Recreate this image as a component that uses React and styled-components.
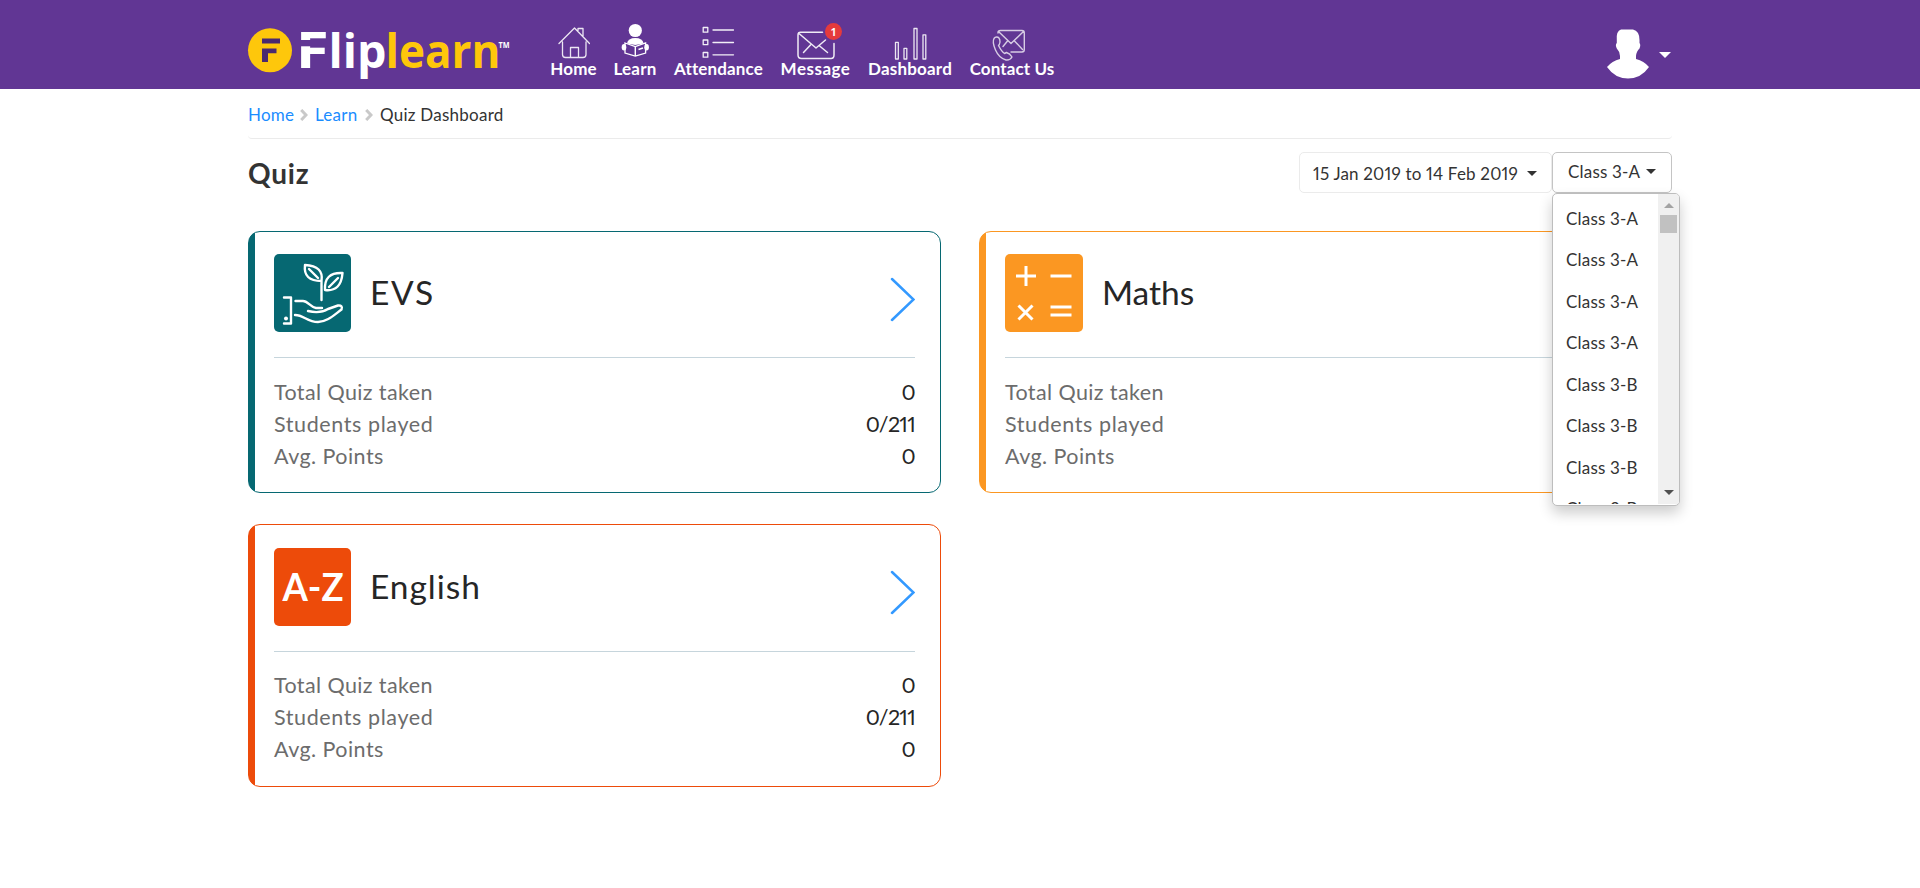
import React from "react";
import styled, { createGlobalStyle } from "styled-components";

const GlobalStyle = createGlobalStyle`
  * { box-sizing: border-box; }
  html, body { margin: 0; padding: 0; background: #fff; }
  body { font-family: Lato, "Open Sans", sans-serif; font-size: 17px; color: #333; overflow: hidden; font-variant-numeric: proportional-nums; }
`;

const Header = styled.header`
  height: 89px;
  background: #613694;
`;

const Container = styled.div`
  width: 1424px;
  margin: 0 auto;
`;

const HeaderInner = styled(Container)`
  display: flex;
  height: 89px;
`;

const Logo = styled.svg`
  display: block;
  flex: none;
  width: 264px;
  height: 60px;
  margin-top: 24px;
  overflow: visible;
`;

const Nav = styled.nav`
  display: flex;
  gap: 18px;
  margin-left: 39px;
  padding-top: 21px;
`;

const NavItem = styled.a`
  position: relative;
  display: flex;
  flex-direction: column;
  align-items: center;
  width: ${(p) => p.$width}px;
  color: #fff;
  font-size: 17px;
  font-weight: 700;
  line-height: 20px;
  white-space: nowrap;
  letter-spacing: ${(p) => p.$track || 0}px;
  svg { display: block; height: 39px; margin-bottom: -1px; }
`;

const Badge = styled.span`
  position: absolute;
  top: 2px;
  left: 44px;
  width: 17px;
  height: 17px;
  border-radius: 50%;
  background: #e53a3c;
  font-size: 12px;
  line-height: 17px;
  text-align: center;
  letter-spacing: 0;
`;

const Account = styled.div`
  display: flex;
  align-items: center;
  gap: 10px;
  margin-left: auto;
  padding: 20px 1px 0 0;
`;

const Caret = styled.i`
  flex: none;
  border: 5px solid transparent;
  border-width: 5px 5px 0;
  border-top-color: ${(p) => p.$color || "#333"};
`;

const BigCaret = styled(Caret)`
  border-width: 6px 6px 0;
`;

const Breadcrumb = styled.div`
  display: flex;
  align-items: center;
  height: 50px;
  padding-top: 2px;
  border-bottom: 1px solid #ebebeb;
  border-radius: 4px;
  font-size: 17px;
  svg { margin: 0 7px; }
`;

const Crumb = styled.span`
  width: ${(p) => p.$width}px;
  white-space: nowrap;
  letter-spacing: 0.25px;
  color: ${(p) => (p.$link ? "#1a8cff" : "#333")};
`;

const TitleRow = styled.div`
  display: flex;
  padding-top: 13px;
  height: 92px;
`;

const Title = styled.h1`
  margin: 0 auto 0 0;
  font-size: 28px;
  font-weight: 700;
  line-height: 42px;
  letter-spacing: 0.8px;
`;

const Select = styled.div`
  position: relative;
  display: flex;
  align-items: center;
  width: ${(p) => p.$width}px;
  height: 41px;
  padding: ${(p) => p.$pad};
  justify-content: space-between;
  border: 1px solid ${(p) => p.$border};
  border-radius: 5px;
  background: #fff;
  white-space: nowrap;
  letter-spacing: ${(p) => p.$track || 0}px;
`;

const Menu = styled.div`
  position: absolute;
  z-index: 2;
  top: 40px;
  left: -1px;
  display: flex;
  width: 128px;
  height: 313px;
  padding-bottom: 1px;
  overflow: hidden;
  border: 1px solid #bdbdbd;
  border-radius: 5px;
  background: #fff;
  box-shadow: 0 7px 14px rgba(0, 0, 0, 0.2);
`;

const Options = styled.div`
  flex: 1;
  padding: 4px 0 0 13px;
  overflow: hidden;
`;

const Option = styled.div`
  height: 41.45px;
  line-height: 41.45px;
  font-size: 17px;
`;

const Scrollbar = styled.div`
  display: flex;
  flex-direction: column;
  align-items: center;
  width: 21px;
  background: #f0f0f0;
`;

const ScrollArrow = styled.i`
  margin: ${(p) => (p.$up ? "9px 0 7px" : "auto 0 9px")};
  border: 5px solid transparent;
  ${(p) =>
    p.$up
      ? "border-top: 0; border-bottom-color: #a3a3a3;"
      : "border-bottom: 0; border-top-color: #505050;"}
`;

const Thumb = styled.i`
  width: 17px;
  height: 18px;
  background: #c1c1c1;
`;

const Cards = styled.div`
  display: grid;
  grid-template-columns: 693px 693px;
  gap: 31.05px 38px;
`;

const Card = styled.section`
  height: 262.4px;
  padding: 22.2px 25px 0 25px;
  border: 1px solid ${(p) => p.$color};
  border-radius: 12px;
  background: linear-gradient(${(p) => p.$color}, ${(p) => p.$color}) 0 0 / 6px 100% no-repeat;
`;

const CardHead = styled.div`
  display: flex;
  height: 104px;
  border-bottom: 1px solid #c6d5dc;
`;

const CardTitle = styled.h2`
  margin: 0 auto 0 19px;
  font-size: 33.5px;
  font-weight: 400;
  line-height: 76px;
  color: #262626;
  letter-spacing: ${(p) => p.$track || 0}px;
`;

const Tile = styled.svg`
  flex: none;
  width: ${(p) => p.$width}px;
  height: 78px;
  border-radius: 5px;
  background: ${(p) => p.$color};
`;

const Arrow = styled.svg`
  margin-top: 22.5px;
`;

const Stats = styled.dl`
  margin: 0;
  padding-top: 17.500px;
  font-size: 21.5px;
  line-height: 32px;
`;

const Stat = styled.div`
  display: flex;
  justify-content: space-between;
  dt { color: #6c6c6c; letter-spacing: ${(p) => p.$track}px; }
  dd { margin: 0; color: #262626; letter-spacing: -0.7px; }
`;

const line = { fill: "none", stroke: "#fff", strokeLinecap: "round", strokeLinejoin: "round" };

const FliplearnLogo = () => (
  <Logo viewBox="248 24 264 60" fontFamily="'Open Sans', sans-serif" fontWeight="700">
    <circle cx="270" cy="50.3" r="22" fill="#fec70b" />
    <path d="M262 38.5H280V43.5H262ZM262 48.5H276.5V53.3H268V62H262Z" fill="#4a2a70" />
    <g fill="#fff" fontSize="47">
      <text x="295.8" y="68.3" fontSize="50.5" textLength="33" lengthAdjust="spacingAndGlyphs">F</text>
      <text x="328.5" y="68.3" textLength="58" lengthAdjust="spacingAndGlyphs">lip</text>
    </g>
    <path d="M298 40H330V46.3H298Z" fill="#613694" />
    <text x="385.5" y="68.3" fontSize="47" fill="#fec70b" textLength="115" lengthAdjust="spacingAndGlyphs">learn</text>
    <text x="498.5" y="47.8" fontSize="8.5" fill="#fff" textLength="11" lengthAdjust="spacingAndGlyphs">TM</text>
  </Logo>
);

const HomeIcon = () => (
  <svg width="32" height="39" viewBox="558 21 32 39" {...line} strokeWidth="1.3" strokeOpacity=".88">
    <path d="M559 43.5L574.5 28L589.5 43.5M562.5 42V54.5Q562.5 57.5 565.5 57.5H583Q586 57.5 586 54.5V42M570.5 57V47.5H578.5V57M578 30.5V28.5H583V36" />
  </svg>
);

const LearnIcon = () => (
  <svg width="28" height="39" viewBox="621 21 28 39">
    <circle cx="635.3" cy="30.5" r="6.6" fill="#fff" />
    <path d="M627 43.5Q628 38 635.3 38T643.6 43.5L635.3 45Z" fill="#fff" />
    <path d="M625 43L635.3 46.5L645.6 43V53L635.3 56L625 53Z" fill="#613694" stroke="#fff" strokeWidth="1.3" />
    <path d="M635.3 46.5V56M638.5 49.500L643 48" stroke="#fff" strokeWidth="1.4" />
    <ellipse cx="624" cy="47.3" rx="2.3" ry="3.2" fill="#fff" />
    <ellipse cx="646.6" cy="47.3" rx="2.3" ry="3.2" fill="#fff" />
  </svg>
);

const ListIcon = () => (
  <svg width="32" height="39" viewBox="702.500 21 32 39" {...line} strokeWidth="1.3" strokeOpacity=".92" overflow="visible">
    <path d="M702.7 27.5H707.3V32.2H702.7ZM702.7 40H707.3V44.7H702.7ZM702.7 52.5H707.3V57.2H702.7ZM712.5 30H733M712.5 42.5H733M712.5 54.8H733" />
  </svg>
);

const MessageIcon = () => (
  <svg width="38" height="39" viewBox="796.5 21 38 39" {...line} strokeWidth="1.500" strokeOpacity=".9">
    <path d="M822 32.3H800Q797.5 32.3 797.5 35V55Q797.5 58.5 801 58.5H830.5Q833.5 58.5 833.5 55V43.5M798.5 33.5L815.5 48L825 40M810 45L803 52.5M818.5 45.5L827 52.5" />
  </svg>
);

const BarsIcon = () => (
  <svg width="33" height="39" viewBox="894 21 33 39" {...line} strokeWidth="1.300" strokeOpacity=".88">
    <path d="M895.5 42.3H898.3V59H895.5ZM904 48.3H906.8V59H904ZM914 28.5H917V59H914ZM923 34.8H925.8V59H923Z" />
  </svg>
);

const ContactSvg = styled.svg`
  margin-right: 6px;
`;

const ContactIcon = () => (
  <ContactSvg width="34" height="39" viewBox="992 21 34 39" overflow="visible" {...line} strokeWidth="1.4" strokeOpacity=".75">
    <path d="M998 33V32.5Q998 30.5 1000.5 30.5H1022Q1024.300 30.5 1024.300 33V49.500Q1024.300 52 1022 52H1011M998.500 31.500L1011 43.500L1023.500 31.500M1007.500 41L1003 46.500M1014.500 41L1022.500 49.500" />
    <path d="M996.500 37Q1000 37 1000 42Q999.500 45 998.500 45.500Q1001.500 51.500 1004.500 53.500L1006.500 52.500Q1010 53.500 1012 57Q1010 60.500 1006 60Q999 58 995.500 50Q992 42 994 38.500Q995 37 996.500 37Z" />
  </ContactSvg>
);

const Avatar = () => (
  <svg width="43" height="51" viewBox="1606 29 43 51">
    <path d="M1621 29.500H1633Q1639.500 31 1639.500 40V43Q1641 45 1639.500 48.500Q1636.500 51 1636 56V59Q1644 61 1649 67Q1641 78.500 1628 78.500T1607 67Q1612 61 1620 59V56Q1619.500 51 1616.800 48.500Q1615 45 1616.800 43V40Q1616 31 1621 29.500Z" fill="#fff" />
  </svg>
);

const CrumbArrow = () => (
  <svg width="8" height="12" viewBox="0 0 8 12" fill="none" stroke="#c9c9c9" strokeWidth="3">
    <path d="M1.200 1L6 6L1.200 11" />
  </svg>
);

const PlantArt = () => (
  <g {...line} strokeWidth="2.400">
    <path d="M47.500 46V27M47.500 27Q50 12 31 11Q29 27 47.500 27M35 15L44 24M51 36Q67 38 68.500 19Q50 18 51 36ZM55 33L64 24" />
    <path d="M10 43.500H17V69.500H10M21.500 47H29C34 47 36 53 42 54H48M34 57Q46 60 54 55L64 51.500Q69 51 67.500 55.500C60 61 53 68 44 68C33 68 30 61 21 61" />
    <circle cx="12" cy="64.500" r="2" fill="#fff" stroke="none" />
  </g>
);

const MathsArt = () => (
  <path d="M11 22H31M21 12V32M45.500 22H66.500M13.500 51.500L27.500 65.500M27.500 51.500L13.500 65.500M45.500 53H66.500M45.500 61H66.500" fill="none" stroke="#fff" strokeWidth="3" />
);

const AlphabetArt = () => (
  <text x="8.500" y="52.500" fill="#fff" fontFamily="Lato, sans-serif" fontSize="38" fontWeight="700" textLength="61" lengthAdjust="spacingAndGlyphs">A-Z</text>
);

const subjects = [
  { name: "EVS", color: "#066872", Art: PlantArt, track: 1.7 },
  { name: "Maths", color: "#fb9722", Art: MathsArt, tile: 78, track: 0 },
  { name: "English", color: "#ed4b0a", Art: AlphabetArt, track: 0.95 },
];

const SubjectCard = ({ name, color, Art, track, tile = 77 }) => (
  <Card $color={color}>
    <CardHead>
      <Tile viewBox={`0 0 ${tile} 78`} $width={tile} $color={color}><Art /></Tile>
      <CardTitle $track={track}>{name}</CardTitle>
      <Arrow width="25" height="45" viewBox="0 0 25 45" fill="none" stroke="#3399ff" strokeWidth="2.500" strokeLinecap="round">
        <path d="M2 2L23.500 22.500L2 43" />
      </Arrow>
    </CardHead>
    <Stats>
      <Stat $track={0.4}><dt>Total Quiz taken</dt><dd>0</dd></Stat>
      <Stat $track={0.6}><dt>Students played</dt><dd>0/211</dd></Stat>
      <Stat $track={0.45}><dt>Avg. Points</dt><dd>0</dd></Stat>
    </Stats>
  </Card>
);

const classes = ["A", "A", "A", "A", "B", "B", "B", "B"];

export default function App() {
  return (
    <>
      <GlobalStyle />
      <Header>
        <HeaderInner>
          <FliplearnLogo />
          <Nav>
            <NavItem $width={45} $track={0.2}><HomeIcon />Home</NavItem>
            <NavItem $width={42} $track={0.2}><LearnIcon />Learn</NavItem>
            <NavItem $width={89} $track={0.15}><ListIcon />Attendance</NavItem>
            <NavItem $width={69} $track={0.5}><MessageIcon />Message<Badge>1</Badge></NavItem>
            <NavItem $width={84} $track={0.2}><BarsIcon />Dashboard</NavItem>
            <NavItem $width={84} $track={0.1}><ContactIcon />Contact Us</NavItem>
          </Nav>
          <Account>
            <Avatar />
            <BigCaret $color="#fff" />
          </Account>
        </HeaderInner>
      </Header>
      <Container>
        <Breadcrumb>
          <Crumb $link $width={45}>Home</Crumb>
          <CrumbArrow />
          <Crumb $link $width={43}>Learn</Crumb>
          <CrumbArrow />
          <Crumb $width={124}>Quiz Dashboard</Crumb>
        </Breadcrumb>
        <TitleRow>
          <Title>Quiz</Title>
          <Select $width={253} $pad="1px 14px 0 13px" $border="#ebebeb" $track={0.19}>
            15 Jan 2019 to 14 Feb 2019
            <Caret />
          </Select>
          <Select $width={120} $pad="0 15px 2px 15px" $border="#c4c4c4" $track={0.2}>
            Class 3-A
            <Caret />
            <Menu>
              <Options>
                {classes.map((section, i) => <Option key={i}>Class 3-{section}</Option>)}
              </Options>
              <Scrollbar>
                <ScrollArrow $up />
                <Thumb />
                <ScrollArrow />
              </Scrollbar>
            </Menu>
          </Select>
        </TitleRow>
        <Cards>
          {subjects.map((s) => <SubjectCard key={s.name} {...s} />)}
        </Cards>
      </Container>
    </>
  );
}
